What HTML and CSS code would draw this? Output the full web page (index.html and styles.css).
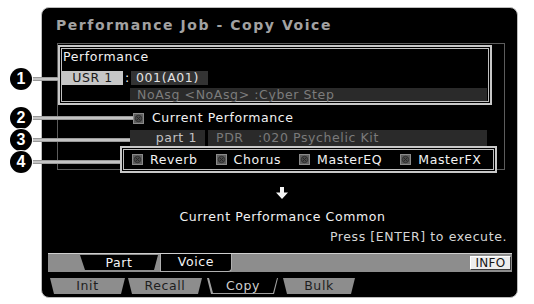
FILE: index.html
```html
<!DOCTYPE html>
<html>
<head>
<meta charset="utf-8">
<link rel="stylesheet" href="styles.css">
</head>
<body>
<div class="page">
  <div class="screen">
    <div class="title">Performance Job - Copy Voice</div>
    <div class="frame">
      <div class="dbox box1">
        <div class="label">Performance</div>
        <div class="bank-row">
          <span class="bank">USR 1</span><span class="colon">:</span><span class="num">001(A01)</span>
        </div>
        <div class="name-row">NoAsg &lt;NoAsg&gt; :Cyber Step</div>
      </div>
      <div class="cur-row">
        <svg class="chk" viewBox="0 0 11 11"><rect x="0.5" y="0.5" width="10" height="10" fill="#5e5e5e" stroke="#8a8a8a"/><circle cx="5.5" cy="5.5" r="3.2" fill="#4a4a4a" stroke="#303030"/><path d="M3.7 3.7l3.6 3.6M7.3 3.7l-3.6 3.6" stroke="#262626"/></svg>
        <span>Current Performance</span>
      </div>
      <div class="part-row">
        <span class="part">part 1</span><span class="voice"><span class="pdr">PDR</span>:020 Psychelic Kit</span>
      </div>
      <div class="dbox box4">
        <span class="item"><svg class="chk" viewBox="0 0 11 11"><rect x="0.5" y="0.5" width="10" height="10" fill="#5e5e5e" stroke="#8a8a8a"/><circle cx="5.5" cy="5.5" r="3.2" fill="#4a4a4a" stroke="#303030"/><path d="M3.7 3.7l3.6 3.6M7.3 3.7l-3.6 3.6" stroke="#262626"/></svg>Reverb</span>
        <span class="item"><svg class="chk" viewBox="0 0 11 11"><rect x="0.5" y="0.5" width="10" height="10" fill="#5e5e5e" stroke="#8a8a8a"/><circle cx="5.5" cy="5.5" r="3.2" fill="#4a4a4a" stroke="#303030"/><path d="M3.7 3.7l3.6 3.6M7.3 3.7l-3.6 3.6" stroke="#262626"/></svg>Chorus</span>
        <span class="item"><svg class="chk" viewBox="0 0 11 11"><rect x="0.5" y="0.5" width="10" height="10" fill="#5e5e5e" stroke="#8a8a8a"/><circle cx="5.5" cy="5.5" r="3.2" fill="#4a4a4a" stroke="#303030"/><path d="M3.7 3.7l3.6 3.6M7.3 3.7l-3.6 3.6" stroke="#262626"/></svg>MasterEQ</span>
        <span class="item"><svg class="chk" viewBox="0 0 11 11"><rect x="0.5" y="0.5" width="10" height="10" fill="#5e5e5e" stroke="#8a8a8a"/><circle cx="5.5" cy="5.5" r="3.2" fill="#4a4a4a" stroke="#303030"/><path d="M3.7 3.7l3.6 3.6M7.3 3.7l-3.6 3.6" stroke="#262626"/></svg>MasterFX</span>
      </div>
    </div>
    <div class="arrow"><svg viewBox="0 0 12 12" width="12" height="12"><path d="M4 0H8V5.5H12L6 12L0 5.5H4Z" fill="#f4f4f4"/></svg></div>
    <div class="common">Current Performance Common</div>
    <div class="hint">Press [ENTER] to execute.</div>
    <div class="tabbar">
      <span class="tab-part">Part</span>
      <span class="tab-voice">Voice</span>
      <span class="info">INFO</span>
    </div>
    <div class="subtabs">
      <span class="sub sub-init">Init</span>
      <span class="sub sub-recall">Recall</span>
      <span class="sub sub-copy"><span class="sub-inner">Copy</span></span>
      <span class="sub sub-bulk">Bulk</span>
    </div>
  </div>

  <div class="callout c1"><span class="dot">1</span><span class="lead"></span></div>
  <div class="callout c2"><span class="dot">2</span><span class="lead"></span></div>
  <div class="callout c3"><span class="dot">3</span><span class="lead"></span></div>
  <div class="callout c4"><span class="dot">4</span><span class="lead"></span></div>
</div>
</body>
</html>
```

FILE: styles.css
```css
* { box-sizing: border-box; margin: 0; padding: 0; }
body { margin: 0; background: #fff; font-family: "DejaVu Sans", sans-serif; }

.page { position: relative; width: 534px; height: 304px; overflow: hidden; padding: 7px 0 0 41px; }

.screen {
  width: 477px; height: 291px;
  border: 1px solid #bcbcbc; border-radius: 8px;
  background: #000; color: #f2f2f2;
  display: flex; flex-direction: column;
  overflow: hidden;
  font-size: 12.5px; letter-spacing: 0.6px; line-height: 14px;
}

.title {
  flex: none; height: 35px; padding-left: 14px; line-height: 34px;
  font-size: 14px; font-weight: bold; color: #a2a2a2; letter-spacing: 1.55px;
}

.frame {
  flex: none; margin-left: 15px; width: 448px; height: 127px;
  border: 1px solid #5c5c5c; padding-top: 1px;
}

.dbox {
  border: 2px solid #c8c8c8;
  box-shadow: inset 0 0 0 1px #000, inset 0 0 0 2px #c0c0c0;
  padding: 2px;
}

.box1 { width: 434px; height: 60px; }
.label { margin-top: 1px; padding-left: 1px; height: 14px; }
.bank-row { display: flex; margin-top: 7px; height: 14px; }
.bank { width: 61px; background: #c6c6c6; color: #1a1a1a; text-align: center; }
.colon { width: 8px; text-align: center; letter-spacing: 0; }
.num { width: 77px; background: #333; color: #e2e2e2; padding-left: 5px; }
.name-row {
  margin-top: 3px; margin-left: 68px; width: 357px; height: 13px; line-height: 13px;
  background: #2a2a2a; color: #7c7c7c; padding-left: 7px;
}

.chk { width: 11px; height: 11px; flex: none; display: block; }

.cur-row { display: flex; align-items: center; gap: 8px; margin-top: 6px; height: 14px; padding-left: 75px; }

.part-row { display: flex; margin-top: 5px; height: 16px; line-height: 16px; padding-left: 72px; }
.part { width: 75px; background: #2a2a2a; color: #c2c2c2; text-align: right; padding-right: 8px; }
.voice { margin-left: 3px; width: 279px; background: #2a2a2a; color: #7a7a7a; padding-left: 8px; }
.pdr { display: inline-block; width: 42px; }

.box4 {
  margin-left: 62px; width: 377px; height: 27px;
  display: flex; align-items: center; gap: 18px; padding-left: 10px;
}
.item { display: flex; align-items: center; gap: 7px; }

.arrow { flex: none; margin-top: 17px; height: 12px; display: flex; justify-content: center; padding-left: 5px; }
.arrow svg { display: block; }

.common { flex: none; margin-top: 11px; height: 14px; text-align: center; padding-left: 6px; }
.hint { flex: none; margin-top: 6px; height: 14px; text-align: right; padding-right: 10px; color: #d6d6d6; }

.tabbar {
  flex: none; margin: 9px 5px 0 6px; height: 19px;
  background: #8d8d8d; border-top: 1px solid #cfcfcf;
  display: flex; align-items: flex-start;
}
.tab-part {
  margin-left: 32px; margin-top: 1px; width: 78px; height: 15px; line-height: 15px;
  background: #000; text-align: center; color: #f4f4f4;
  clip-path: polygon(0 0, 100% 0, calc(100% - 4px) 100%, 5px 100%);
}
.tab-voice {
  margin-left: 2px; width: 72px; height: 18px; line-height: 15px;
  background: #000; color: #f4f4f4; text-align: center;
  border: 1px solid #b0b0b0; border-top: none; border-bottom-right-radius: 4px;
}
.info {
  margin-left: auto; margin-right: 1px; margin-top: 2px; width: 41px; height: 14px; line-height: 13px;
  background: #ededed; color: #151515; text-align: center; font-size: 12px; letter-spacing: 0.3px;
  border: 1px solid #3a3a3a; border-top-color: #fff; border-left-color: #fff;
}

.subtabs { flex: none; margin-top: 3px; height: 22px; display: flex; padding: 3px 0 0 8px; align-items: flex-start; }
.sub {
  height: 16px; line-height: 16px; text-align: center; color: #1e1e1e;
  background: #8d8d8d;
  clip-path: polygon(0 0, 100% 0, calc(100% - 4px) 100%, 4px 100%);
}
.sub-init { width: 75px; }
.sub-recall { width: 74px; margin-left: 3px; }
.sub-copy { width: 71px; margin-left: 5px; background: #a0a0a0; display: flex; }
.sub-inner {
  flex: 1; margin: 0 1px 1px 2px; background: #000; color: #cfcfcf;
  clip-path: polygon(0 0, 100% 0, calc(100% - 4px) 100%, 4px 100%);
}
.sub-bulk { width: 72px; margin-left: 5px; }

.callout { position: absolute; left: 10px; height: 22px; display: flex; align-items: center; }
.dot {
  position: relative; z-index: 1;
  width: 22px; height: 22px; border-radius: 50%; flex: none;
  background: #000; box-shadow: 0 0 0 1px #fff;
  color: #fff; font-family: "Liberation Sans", sans-serif; font-weight: bold; font-size: 16px;
  line-height: 22px; text-align: center;
}
.lead { flex: 1; height: 4px; background: #c4c4c4; border-top: 1px solid #9a9a9a; border-bottom: 1px solid #9a9a9a; margin-left: -2px; }
.c1 { top: 68px; width: 48px; }
.c2 { top: 107px; width: 123px; }
.c3 { top: 129px; width: 120px; }
.c4 { top: 151px; width: 110px; }
```
